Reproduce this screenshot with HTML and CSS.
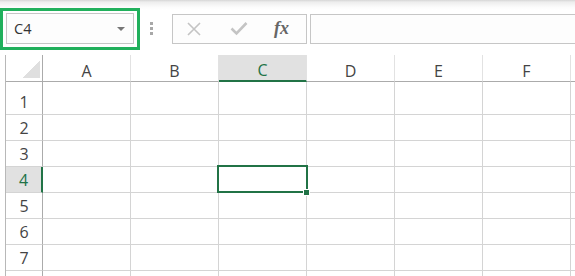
FILE: index.html
```html
<!DOCTYPE html>
<html lang="en">
<head>
    <meta charset="UTF-8">
    <meta name="viewport" content="width=device-width, initial-scale=1.0">
    <title>Sheet</title>
    <link rel="stylesheet" href="styles.css">
</head>
<body>

    <div class="formula-bar">
        <div class="name-focus">
            <div class="name-box">
                <span>C4</span>
                <span class="caret"></span>
            </div>
        </div>
        <div class="grip"><i></i><i></i><i></i></div>
        <div class="fx-buttons">
            <svg class="icon" width="16" height="16" viewBox="0 0 16 16">
                <path d="M2 2 L14 14 M14 2 L2 14" stroke="#c4c4c4" stroke-width="1.6" fill="none"/>
            </svg>
            <svg class="icon" width="18" height="16" viewBox="0 0 18 16">
                <path d="M1.5 7.5 L6.5 12.5 L16.5 2" stroke="#c4c4c4" stroke-width="2.6" fill="none"/>
            </svg>
            <span class="fx">fx</span>
        </div>
        <div class="formula-input"></div>
    </div>

    <div class="sheet">
        <div class="cell corner"><span></span></div>
        <div class="cell col-head">A</div>
        <div class="cell col-head">B</div>
        <div class="cell col-head active">C</div>
        <div class="cell col-head">D</div>
        <div class="cell col-head">E</div>
        <div class="cell col-head">F</div>
        <div class="cell col-head"></div>

        <div class="cell row-head">1</div>
        <div class="cell"></div><div class="cell"></div><div class="cell"></div><div class="cell"></div><div class="cell"></div><div class="cell"></div><div class="cell"></div>
        <div class="cell row-head">2</div>
        <div class="cell"></div><div class="cell"></div><div class="cell"></div><div class="cell"></div><div class="cell"></div><div class="cell"></div><div class="cell"></div>
        <div class="cell row-head">3</div>
        <div class="cell"></div><div class="cell"></div><div class="cell"></div><div class="cell"></div><div class="cell"></div><div class="cell"></div><div class="cell"></div>
        <div class="cell row-head active">4</div>
        <div class="cell"></div><div class="cell"></div><div class="cell"></div><div class="cell"></div><div class="cell"></div><div class="cell"></div><div class="cell"></div>
        <div class="cell row-head">5</div>
        <div class="cell"></div><div class="cell"></div><div class="cell"></div><div class="cell"></div><div class="cell"></div><div class="cell"></div><div class="cell"></div>
        <div class="cell row-head">6</div>
        <div class="cell"></div><div class="cell"></div><div class="cell"></div><div class="cell"></div><div class="cell"></div><div class="cell"></div><div class="cell"></div>
        <div class="cell row-head">7</div>
        <div class="cell"></div><div class="cell"></div><div class="cell"></div><div class="cell"></div><div class="cell"></div><div class="cell"></div><div class="cell"></div>
        <div class="cell row-head"></div>
        <div class="cell"></div><div class="cell"></div><div class="cell"></div><div class="cell"></div><div class="cell"></div><div class="cell"></div><div class="cell"></div>

        <div class="selection"></div>
        <div class="fill-handle"></div>
    </div>

</body>
</html>
```

FILE: styles.css
```css
body {
    margin: 0;
    width: 575px;
    height: 276px;
    overflow: hidden;
    background: #fff;
    font-family: "Open Sans", "Noto Sans", sans-serif;
    color: #444;
}
.formula-bar {
    height: 55px;
    display: flex;
    align-items: flex-start;
    background: linear-gradient(to bottom, #d6d6d6 0, #ededed 2px, #fbfbfb 7px, #fff 10px);
}
.name-focus {
    box-sizing: border-box;
    width: 140px;
    height: 42px;
    margin-top: 8px;
    padding: 2px 3px 2px 3px;
    border: 3px solid #21b05c;
    background: #fff;
}
.name-box {
    box-sizing: border-box;
    height: 31px;
    border: 1px solid #c6c6c6;
    background: #fdfdfd;
    display: flex;
    align-items: center;
    justify-content: space-between;
    padding: 0 8px 0 7px;
    font-size: 14.5px;
    color: #333;
}
.caret {
    width: 0;
    height: 0;
    border-left: 4px solid transparent;
    border-right: 4px solid transparent;
    border-top: 4px solid #777;
    margin-top: 1px;
}
.grip {
    margin: 22px 0 0 10px;
    width: 3px;
    display: flex;
    flex-direction: column;
    gap: 2px;
}
.grip i {
    display: block;
    width: 3px;
    height: 3px;
    background: #a8a8a8;
}
.fx-buttons {
    box-sizing: border-box;
    width: 135px;
    height: 30px;
    margin: 14px 0 0 19px;
    border: 1px solid #c6c6c6;
    background: #fdfdfd;
    display: flex;
    align-items: center;
    padding-left: 13px;
    gap: 28px;
}
.icon {
    display: block;
}
.fx {
    font-family: "Liberation Serif", "DejaVu Serif", serif;
    font-style: italic;
    font-weight: bold;
    font-size: 18px;
    color: #666;
    margin-left: -2px;
    margin-top: -2px;
}
.formula-input {
    box-sizing: border-box;
    flex: 1;
    height: 30px;
    margin: 14px -10px 0 3px;
    border: 1px solid #c6c6c6;
    background: #fdfdfd;
}
.sheet {
    position: relative;
    margin-left: 5px;
    border-left: 1px solid #b8b8b8;
    display: grid;
    grid-template-columns: 37px repeat(7, 88px);
    grid-template-rows: 27px 33px repeat(7, 26px);
}
.cell {
    box-sizing: border-box;
    border-right: 1px solid #d4d4d4;
    border-bottom: 1px solid #d4d4d4;
}
.corner {
    border-right: 1px solid #ababab;
    border-bottom: 1px solid #ababab;
    display: flex;
    justify-content: flex-end;
    align-items: flex-end;
    padding: 0 2px 3px 0;
}
.corner span {
    width: 18px;
    height: 17px;
    background: linear-gradient(to bottom right, transparent 50%, #dfdfdf 50%);
}
.col-head {
    border-right: 1px solid #e2e2e2;
    border-bottom: 1px solid #ababab;
    display: flex;
    align-items: flex-end;
    justify-content: center;
    font-size: 16px;
    line-height: 20px;
}
.col-head.active {
    background: #e1e1e1;
    border-bottom: 2px solid #217346;
    color: #217346;
}
.row-head {
    border-right: 1px solid #ababab;
    display: flex;
    align-items: flex-end;
    justify-content: center;
    font-size: 16px;
    line-height: 20px;
    padding-bottom: 2px;
}
.row-head.active {
    background: #e1e1e1;
    border-right: 2px solid #217346;
    color: #217346;
}
.selection {
    position: absolute;
    left: 211px;
    top: 110px;
    width: 91px;
    height: 28px;
    box-sizing: border-box;
    border: 2px solid #217346;
}
.fill-handle {
    position: absolute;
    left: 297px;
    top: 134px;
    width: 5px;
    height: 5px;
    background: #217346;
    border: 1px solid #fff;
}
```
